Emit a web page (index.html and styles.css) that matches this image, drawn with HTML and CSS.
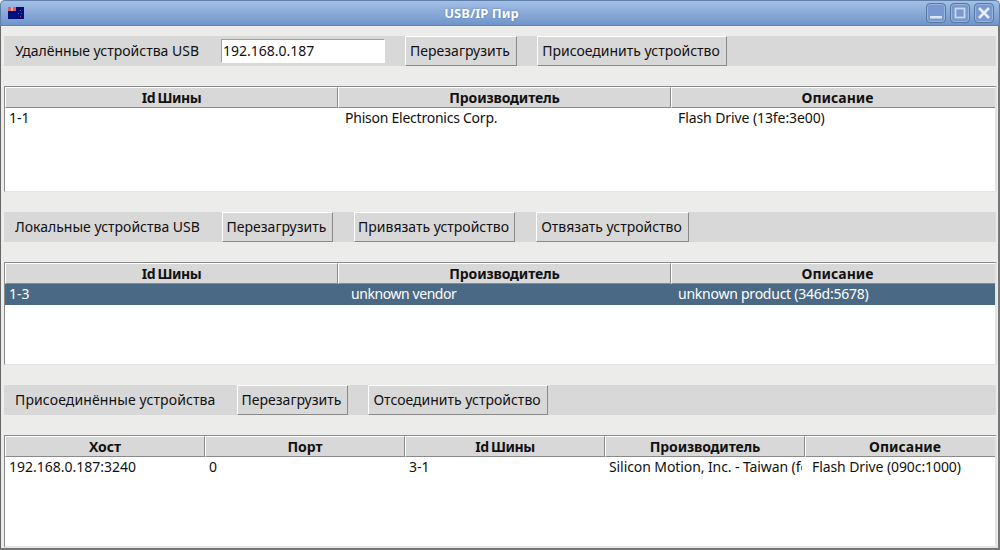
FILE: index.html
```html
<!DOCTYPE html>
<html lang="ru">
<head>
<meta charset="utf-8">
<title>USB/IP Пир</title>
<link rel="stylesheet" href="styles.css">
</head>
<body>
<div class="window">
  <header class="titlebar">
    <svg class="app-icon" width="16" height="12" viewBox="0 0 16 12"><rect width="16" height="12" fill="#00107a"/><rect width="8" height="4" fill="#d9606a"/><rect x="3" y="0" width="2" height="4" fill="#f0a0a0"/><rect x="12" y="3" width="1" height="1" fill="#b04060"/><rect x="10" y="6" width="1" height="1" fill="#b04060"/><rect x="13" y="6" width="1" height="1" fill="#903070"/><rect x="12" y="9" width="1" height="1" fill="#b04060"/></svg>
    <div class="title">USB/IP Пир</div>
    <div class="controls">
      <div class="ctl"><svg width="18" height="18" viewBox="0 0 18 18"><rect x="3" y="12" width="12" height="2.500" fill="#dce7f6"/></svg></div>
      <div class="ctl"><svg width="18" height="18" viewBox="0 0 18 18"><rect x="4.500" y="4.500" width="9" height="9" fill="none" stroke="#c9daf1" stroke-width="1.800"/></svg></div>
      <div class="ctl"><svg width="18" height="18" viewBox="0 0 18 18"><path d="M4 4L14 14M14 4L4 14" stroke="#e6edf8" stroke-width="2.600"/></svg></div>
    </div>
  </header>
  <main class="content">
    <div class="toolbar">
      <span class="label l1">Удалённые устройства USB</span>
      <input class="ip" value="192.168.0.187">
      <button class="btn w-reload">Перезагрузить</button>
      <button class="btn w-attach">Присоединить устройство</button>
    </div>
    <div class="table tbl1">
      <div class="row three head"><div class="th idh">Id Шины</div><div class="th prod">Производитель</div><div class="th">Описание</div></div>
      <div class="row three"><div class="td">1-1</div><div class="td ind tight2">Phison Electronics Corp.</div><div class="td ind tight1">Flash Drive (13fe:3e00)</div></div>
    </div>
    <div class="toolbar wide-gap">
      <span class="label l2">Локальные устройства USB</span>
      <button class="btn w-reload2">Перезагрузить</button>
      <button class="btn w-bind">Привязать устройство</button>
      <button class="btn w-unbind">Отвязать устройство</button>
    </div>
    <div class="table tbl2">
      <div class="row three head"><div class="th idh">Id Шины</div><div class="th prod">Производитель</div><div class="th">Описание</div></div>
      <div class="row three selected"><div class="td">1-3</div><div class="td ind2 tight3">unknown vendor</div><div class="td ind tight2">unknown product (346d:5678)</div></div>
    </div>
    <div class="toolbar">
      <span class="label l3">Присоединённые устройства</span>
      <button class="btn w-reload2">Перезагрузить</button>
      <button class="btn w-detach">Отсоединить устройство</button>
    </div>
    <div class="table tbl3">
      <div class="row five head"><div class="th">Хост</div><div class="th">Порт</div><div class="th idh">Id Шины</div><div class="th prod">Производитель</div><div class="th">Описание</div></div>
      <div class="row five"><div class="td">192.168.0.187:3240</div><div class="td">0</div><div class="td">3-1</div><div class="td clip tight1">Silicon Motion, Inc. - Taiwan (formerly Feiya)</div><div class="td ind tight1">Flash Drive (090c:1000)</div></div>
    </div>
  </main>
</div>
</body>
</html>
```
FILE: styles.css
```css
* { box-sizing: border-box; }
html, body { margin: 0; height: 100%; }
body { font-family: "Noto Sans", sans-serif; font-size: 14px; color: #111; overflow: hidden; background: #ececea; }
.window { width: 1000px; height: 550px; display: flex; flex-direction: column; overflow: hidden; background: #ececea; }
.titlebar { height: 26px; flex: none; display: flex; align-items: center; background: linear-gradient(#a3bfe6, #7094ca); border: 1px solid #5f7fa8; border-bottom-color: #5f82b5; border-radius: 5px 5px 0 0; padding: 0 5px 0 7px; }
.app-icon { flex: none; }
.title { flex: 1; text-align: center; color: #fff; font-size: 13px; font-weight: 700; padding-left: 13px; text-shadow: 0 0 2px #4f74a8; }
.controls { display: flex; gap: 4px; }
.ctl { width: 20px; height: 20px; display: flex; align-items: center; justify-content: center; border: 1px solid #56779f; border-radius: 4px; background: #7898cf; box-shadow: inset 0 0 0 1px #98b4df; }
.content { flex: 1; display: flex; flex-direction: column; padding: 10px 1px 0 3px; min-height: 0; border-left: 1px solid #666; border-right: 2px solid #777; border-bottom: 2px solid #777; }
.toolbar { height: 30px; flex: none; display: flex; align-items: stretch; background: #d8d8d8; margin-right: 1px; }
.label { display: flex; align-items: center; padding: 0 0 2px 11px; }
.l1 { width: 217px; }
.l2 { width: 218px; }
.l3 { width: 233px; letter-spacing: 0.12px; }
.ip { width: 164px; height: 24px; margin: 3px 20px 3px 0; border: 1px solid #fff; border-top-color: #a0a0a0; border-left-color: #a0a0a0; padding: 0 1px 2px; font: inherit; color: #111; background: #fff; outline: 0; }
.btn { flex: none; font: inherit; color: #111; padding: 0 2px 2px 0; margin-right: 20px; background: #d8d8d8; border: 1px solid #8a8a8a; border-top-color: #fff; border-left-color: #fff; }
.wide-gap .btn { margin-right: 21px; }
.w-reload { width: 112px; }
.w-reload2 { width: 111px; }
.w-attach { width: 190px; }
.w-bind { width: 161px; }
.w-unbind { width: 153px; }
.w-detach { width: 180px; }
.table { flex: none; margin: 20px 0; background: #fff; border: 1px solid #8a8a8a; border-bottom: 1px solid #e4e4e4; border-right: 2px solid #e4e4e4; overflow: hidden; }
.tbl1 { height: 106px; }
.tbl2 { height: 103px; }
.tbl3 { flex: 1; margin-bottom: 0; border-bottom-width: 2px; }
.row { display: grid; height: 21px; }
.three { grid-template-columns: repeat(3, 333px); }
.five { grid-template-columns: repeat(5, 200px); }
.th { background: #d8d8d8; font-weight: 700; text-align: center; line-height: 19px; border: 1px solid #8a8a8a; border-top-color: #fff; border-left-color: #fff; }
.idh { letter-spacing: -0.4px; word-spacing: -1px; }
.prod { letter-spacing: -0.15px; }
.td { padding-left: 4px; line-height: 19px; white-space: nowrap; overflow: hidden; }
.ind { padding-left: 7px; }
.ind2 { padding-left: 13px; }
.clip { width: 197px; }
.tight1 { letter-spacing: -0.09px; }
.tight2 { letter-spacing: -0.24px; }
.tight3 { letter-spacing: -0.43px; }
.selected { background: #4a6984; color: #fff; }
```
